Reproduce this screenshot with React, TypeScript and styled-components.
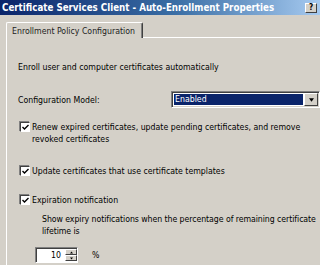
import React from "react";
import styled, { createGlobalStyle } from "styled-components";

const Global = createGlobalStyle`
  html, body { margin: 0; padding: 0; background: #d4d0c8; overflow: hidden; }
  body {
    font-family: "DejaVu Sans Condensed", "DejaVu Sans", sans-serif;
    font-size: 8.7px;
    color: #000;
  }
`;

const Window = styled.div`
  width: 320px;
  height: 265px;
  overflow: hidden;
  display: flex;
  flex-direction: column;
  background: #d4d0c8;
`;

const TitleBar = styled.div`
  height: 15px;
  flex: none;
  display: flex;
  align-items: center;
  padding-left: 2px;
  overflow: hidden;
  background: linear-gradient(to right, #0a246a 0%, #3a6ea5 55%, #a6caf0 100%);
  color: #fff;
  font-weight: bold;
  font-size: 9.7px;
  white-space: nowrap;
`;

const TitleText = styled.span`
  flex: 1;
  min-width: 0;
  overflow: hidden;
`;

const Controls = styled.div`
  flex: none;
  display: flex;
  gap: 3px;
  margin-right: -12px;
`;

const CaptionButton = styled.div`
  width: 12px;
  height: 10px;
  box-sizing: border-box;
  background: #d4d0c8;
  border-top: 1px solid #fff;
  border-left: 1px solid #fff;
  border-right: 1px solid #404040;
  border-bottom: 1px solid #404040;
  color: #000;
  font-size: 8px;
  line-height: 8px;
  text-align: center;
  font-weight: bold;
`;

const Body = styled.div`
  flex: 1;
  padding: 7px 0 0 6px;
  display: flex;
  flex-direction: column;
`;

const TabStrip = styled.div`
  display: flex;
  flex: none;
`;

const Tab = styled.div`
  position: relative;
  z-index: 1;
  width: 137px;
  height: 16px;
  margin-bottom: -1px;
  box-sizing: border-box;
  background: #d4d0c8;
  border-top: 1px solid #fff;
  border-left: 1px solid #fff;
  border-right: 1px solid #404040;
  box-shadow: inset -1px 0 0 #808080;
  border-radius: 2px 2px 0 0;
  padding: 2px 0 0 5px;
  line-height: 12px;
  color: #222;
  white-space: nowrap;
`;

const Panel = styled.div`
  flex: 1;
  width: 400px;
  border-top: 1px solid #fff;
  border-left: 1px solid #fff;
  padding: 23px 0 0 11px;
  display: flex;
  flex-direction: column;
  align-items: flex-start;
`;

const Line = styled.div<{ $top?: number; $indent?: number; $width?: number; $tight?: boolean }>`
  margin-top: ${(p) => p.$top ?? 0}px;
  padding-left: ${(p) => p.$indent ?? 0}px;
  line-height: 12px;
  width: ${(p) => p.$width ?? 276}px;
  letter-spacing: ${(p) => (p.$tight ? "-0.06px" : "normal")};
`;

const ConfigRow = styled.div`
  margin-top: 18px;
  display: flex;
  align-items: center;
  height: 17px;
`;

const Label = styled.span`
  width: 153px;
  line-height: 12px;
`;

const Combo = styled.div`
  width: 149px;
  height: 17px;
  box-sizing: border-box;
  border-top: 1px solid #808080;
  border-left: 1px solid #808080;
  border-right: 1px solid #fff;
  border-bottom: 1px solid #fff;
  box-shadow: inset 1px 1px 0 #404040, inset -1px -1px 0 #d4d0c8;
  background: #fff;
  display: flex;
  padding: 2px;
`;

const ComboValue = styled.div`
  flex: 1;
  background: #0a246a;
  color: #fff;
  line-height: 11px;
  padding-left: 1px;
`;

const ComboButton = styled.div`
  width: 14px;
  flex: none;
  box-sizing: border-box;
  background: #d4d0c8;
  border-top: 1px solid #fff;
  border-left: 1px solid #fff;
  border-right: 1px solid #404040;
  border-bottom: 1px solid #404040;
  display: flex;
  align-items: center;
  justify-content: center;
  margin: -1px -1px -1px 1px;
`;

const CheckRow = styled.div<{ $top: number }>`
  margin-top: ${(p) => p.$top}px;
  display: flex;
  align-items: flex-start;
  padding-left: 2px;
`;

const Box = styled.div`
  width: 10px;
  height: 10px;
  flex: none;
  box-sizing: border-box;
  background: #fff;
  border-top: 1px solid #404040;
  border-left: 1px solid #404040;
  border-right: 1px solid #fff;
  border-bottom: 1px solid #fff;
  box-shadow: -1px -1px 0 #808080;
  margin-top: 1px;
  margin-right: 2px;
  display: flex;
  align-items: center;
  justify-content: center;
`;

const CheckText = styled.div`
  line-height: 12px;
  width: 280px;
`;

const SpinRow = styled.div`
  margin-top: 10px;
  display: flex;
  align-items: center;
  padding-left: 17px;
`;

const SpinBox = styled.div`
  width: 43px;
  height: 16px;
  box-sizing: border-box;
  border-top: 1px solid #808080;
  border-left: 1px solid #808080;
  border-right: 1px solid #fff;
  border-bottom: 1px solid #fff;
  box-shadow: inset 1px 1px 0 #404040;
  background: #fff;
  display: flex;
`;

const SpinValue = styled.div`
  flex: 1;
  text-align: right;
  padding-right: 4px;
  line-height: 14px;
`;

const SpinButtons = styled.div`
  width: 12px;
  display: flex;
  flex-direction: column;
  padding: 1px 0;
`;

const SpinBtn = styled.div`
  flex: 1;
  box-sizing: border-box;
  background: #d4d0c8;
  border-top: 1px solid #fff;
  border-left: 1px solid #fff;
  border-right: 1px solid #404040;
  border-bottom: 1px solid #404040;
  display: flex;
  align-items: center;
  justify-content: center;
`;

const Percent = styled.span`
  margin-left: 14px;
`;

const Check = () => (
  <svg width="7" height="7" viewBox="0 0 7 7">
    <path d="M0.5 3 L2.5 5 L6.5 1" fill="none" stroke="#000" strokeWidth="1.4" />
  </svg>
);

const Arrow = ({ up, size = 5 }: { up?: boolean; size?: number }) => (
  <svg width={size} height={Math.ceil(size / 2) + 1} viewBox="0 0 6 4">
    <path d={up ? "M0 4 L3 0 L6 4 Z" : "M0 0 L6 0 L3 4 Z"} fill="#000" />
  </svg>
);

export default function App() {
  return (
    <Window>
      <Global />
      <TitleBar>
        <TitleText>Certificate Services Client - Auto-Enrollment Properties</TitleText>
        <Controls>
          <CaptionButton>?</CaptionButton>
          <CaptionButton />
        </Controls>
      </TitleBar>
      <Body>
        <TabStrip>
          <Tab>Enrollment Policy Configuration</Tab>
        </TabStrip>
        <Panel>
          <Line>Enroll user and computer certificates automatically</Line>
          <ConfigRow>
            <Label>Configuration Model:</Label>
            <Combo>
              <ComboValue>Enabled</ComboValue>
              <ComboButton>
                <Arrow />
              </ComboButton>
            </Combo>
          </ConfigRow>
          <CheckRow $top={13}>
            <Box>
              <Check />
            </Box>
            <CheckText>
              Renew expired certificates, update pending certificates, and remove revoked certificates
            </CheckText>
          </CheckRow>
          <CheckRow $top={20}>
            <Box>
              <Check />
            </Box>
            <CheckText>Update certificates that use certificate templates</CheckText>
          </CheckRow>
          <CheckRow $top={17}>
            <Box>
              <Check />
            </Box>
            <CheckText>Expiration notification</CheckText>
          </CheckRow>
          <Line $top={7} $indent={24} $width={296} $tight>
            Show expiry notifications when the percentage of remaining certificate lifetime is
          </Line>
          <SpinRow>
            <SpinBox>
              <SpinValue>10</SpinValue>
              <SpinButtons>
                <SpinBtn>
                  <Arrow up size={3} />
                </SpinBtn>
                <SpinBtn>
                  <Arrow size={3} />
                </SpinBtn>
              </SpinButtons>
            </SpinBox>
            <Percent>%</Percent>
          </SpinRow>
        </Panel>
      </Body>
    </Window>
  );
}
